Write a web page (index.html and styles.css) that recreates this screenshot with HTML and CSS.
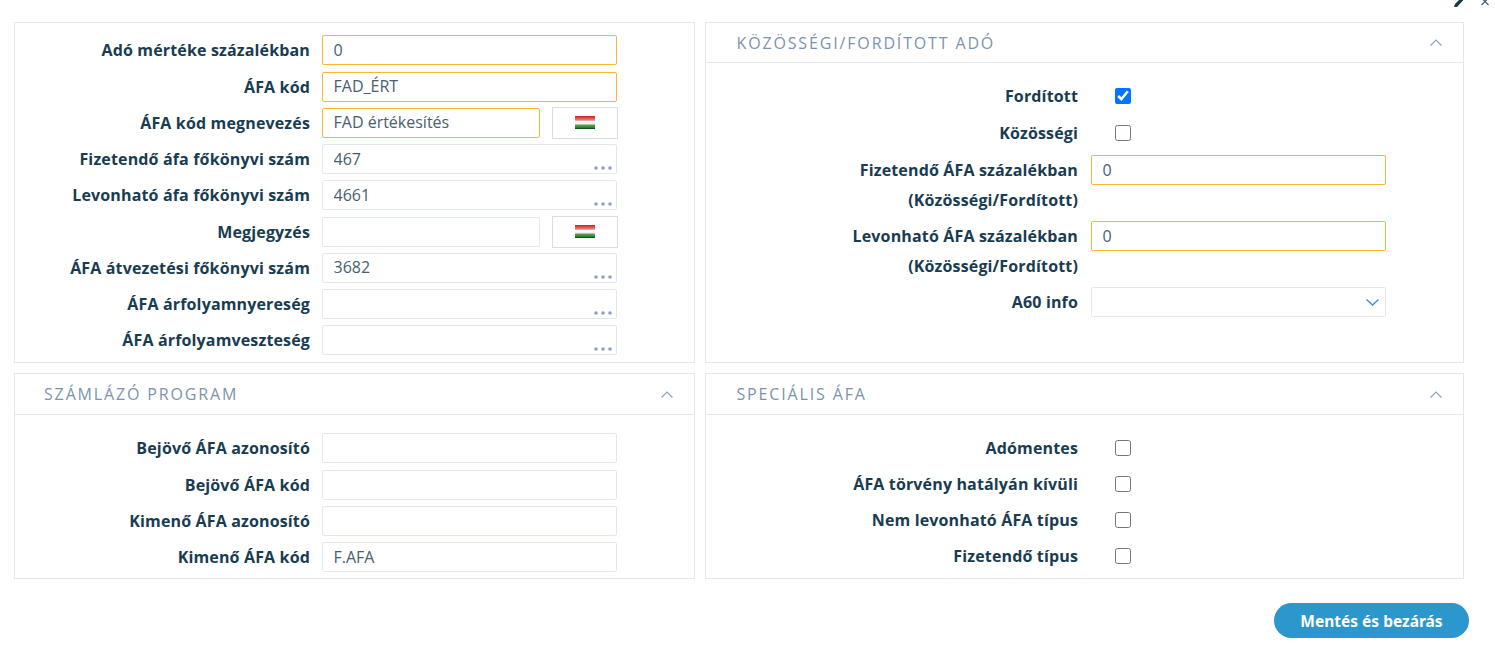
FILE: index.html
```html
<!DOCTYPE html>
<html lang="en">
<head>
    <meta charset="UTF-8">
    <meta name="viewport" content="width=device-width, initial-scale=1.0">
    <title>ÁFA kód</title>
    <link rel="stylesheet" href="styles.css">
</head>
<body>
    <div class="toolbar">
        <svg class="tool-pencil" width="9" height="7" viewBox="0 0 9 7"><path d="M0 7 L1 4 L5 0 L9 0 L9 0.5 L3 7 Z" fill="#173a50"/></svg>
        <svg class="tool-close" width="8" height="6" viewBox="0 0 8 6"><path d="M0.5 -2 L7.5 5 M7.5 -2 L0.5 5" stroke="#3f5f75" stroke-width="1.2" fill="none"/></svg>
    </div>

    <div class="grid">
        <section class="card">
            <div class="card-body first">
                <div class="row"><label>Adó mértéke százalékban</label><input class="field required" type="text" value="0"></div>
                <div class="row"><label>ÁFA kód</label><input class="field required" type="text" value="FAD_ÉRT"></div>
                <div class="row">
                    <label>ÁFA kód megnevezés</label>
                    <input class="field short required" type="text" value="FAD értékesítés">
                    <button class="flag-btn"><span class="flag"></span></button>
                </div>
                <div class="row">
                    <label>Fizetendő áfa főkönyvi szám</label>
                    <div class="lookup"><input class="field" type="text" value="467"><svg class="dots" width="18" height="4" viewBox="0 0 18 4"><circle cx="2" cy="2" r="1.8"/><circle cx="9" cy="2" r="1.8"/><circle cx="16" cy="2" r="1.8"/></svg></div>
                </div>
                <div class="row">
                    <label>Levonható áfa főkönyvi szám</label>
                    <div class="lookup"><input class="field" type="text" value="4661"><svg class="dots" width="18" height="4" viewBox="0 0 18 4"><circle cx="2" cy="2" r="1.8"/><circle cx="9" cy="2" r="1.8"/><circle cx="16" cy="2" r="1.8"/></svg></div>
                </div>
                <div class="row">
                    <label>Megjegyzés</label>
                    <input class="field short" type="text" value="">
                    <button class="flag-btn"><span class="flag"></span></button>
                </div>
                <div class="row">
                    <label>ÁFA átvezetési főkönyvi szám</label>
                    <div class="lookup"><input class="field" type="text" value="3682"><svg class="dots" width="18" height="4" viewBox="0 0 18 4"><circle cx="2" cy="2" r="1.8"/><circle cx="9" cy="2" r="1.8"/><circle cx="16" cy="2" r="1.8"/></svg></div>
                </div>
                <div class="row">
                    <label>ÁFA árfolyamnyereség</label>
                    <div class="lookup"><input class="field" type="text" value=""><svg class="dots" width="18" height="4" viewBox="0 0 18 4"><circle cx="2" cy="2" r="1.8"/><circle cx="9" cy="2" r="1.8"/><circle cx="16" cy="2" r="1.8"/></svg></div>
                </div>
                <div class="row">
                    <label>ÁFA árfolyamveszteség</label>
                    <div class="lookup"><input class="field" type="text" value=""><svg class="dots" width="18" height="4" viewBox="0 0 18 4"><circle cx="2" cy="2" r="1.8"/><circle cx="9" cy="2" r="1.8"/><circle cx="16" cy="2" r="1.8"/></svg></div>
                </div>
            </div>
        </section>

        <section class="card wide">
            <div class="card-header">
                <h2>KÖZÖSSÉGI/FORDÍTOTT ADÓ</h2>
                <svg class="chevron" width="12" height="7" viewBox="0 0 12 7"><path d="M0.5 6.5 L6 1 L11.5 6.5" fill="none" stroke="#8fa3bc" stroke-width="1.2"/></svg>
            </div>
            <div class="card-body">
                <div class="row check-row loose"><label>Fordított</label><input class="check" type="checkbox" checked></div>
                <div class="row check-row loose"><label>Közösségi</label><input class="check" type="checkbox"></div>
                <div class="row tall"><label>Fizetendő ÁFA százalékban<br>(Közösségi/Fordított)</label><input class="field required" type="text" value="0"></div>
                <div class="row tall"><label>Levonható ÁFA százalékban<br>(Közösségi/Fordított)</label><input class="field required" type="text" value="0"></div>
                <div class="row tall">
                    <label>A60 info</label>
                    <div class="lookup">
                        <select class="field select"><option></option></select>
                        <svg class="select-arrow" width="13" height="7" viewBox="0 0 13 7"><path d="M0.5 0.5 L6.5 6 L12.5 0.5" fill="none" stroke="#2c97cc" stroke-width="1.4"/></svg>
                    </div>
                </div>
            </div>
        </section>

        <section class="card lower">
            <div class="card-header">
                <h2>SZÁMLÁZÓ PROGRAM</h2>
                <svg class="chevron" width="12" height="7" viewBox="0 0 12 7"><path d="M0.5 6.5 L6 1 L11.5 6.5" fill="none" stroke="#8fa3bc" stroke-width="1.2"/></svg>
            </div>
            <div class="card-body">
                <div class="row"><label>Bejövő ÁFA azonosító</label><input class="field" type="text" value=""></div>
                <div class="row"><label>Bejövő ÁFA kód</label><input class="field" type="text" value=""></div>
                <div class="row"><label>Kimenő ÁFA azonosító</label><input class="field" type="text" value=""></div>
                <div class="row"><label>Kimenő ÁFA kód</label><input class="field" type="text" value="F.AFA"></div>
            </div>
        </section>

        <section class="card wide lower">
            <div class="card-header">
                <h2>SPECIÁLIS ÁFA</h2>
                <svg class="chevron" width="12" height="7" viewBox="0 0 12 7"><path d="M0.5 6.5 L6 1 L11.5 6.5" fill="none" stroke="#8fa3bc" stroke-width="1.2"/></svg>
            </div>
            <div class="card-body">
                <div class="row check-row"><label>Adómentes</label><input class="check" type="checkbox"></div>
                <div class="row check-row"><label>ÁFA törvény hatályán kívüli</label><input class="check" type="checkbox"></div>
                <div class="row check-row"><label>Nem levonható ÁFA típus</label><input class="check" type="checkbox"></div>
                <div class="row check-row"><label>Fizetendő típus</label><input class="check" type="checkbox"></div>
            </div>
        </section>
    </div>

    <div class="footer">
        <button class="save-btn">Mentés és bezárás</button>
    </div>
</body>
</html>
```

FILE: styles.css
```css
* {
    box-sizing: border-box;
}
body {
    margin: 0;
    background-color: #fff;
    font-family: "Open Sans", Arial, sans-serif;
    font-size: 16px;
    color: #183c52;
}
.toolbar {
    display: flex;
    justify-content: flex-end;
    align-items: flex-start;
    height: 22px;
    padding-right: 6px;
}
.tool-pencil {
    margin-right: 18px;
}
.grid {
    display: grid;
    grid-template-columns: 681px 759px;
    grid-template-rows: 341px 206px;
    gap: 10px;
    padding-left: 14px;
}
.card {
    border: 1px solid #e1e8ee;
}
.card-header {
    display: flex;
    justify-content: space-between;
    align-items: center;
    height: 40px;
    padding: 0 21px 0 29px;
    border-bottom: 1px solid #e1e8ee;
}
.wide .card-header {
    padding-left: 30.5px;
}
.lower .card-header {
    height: 41px;
}
.card-header h2 {
    margin: 0;
    font-size: 16px;
    font-weight: 400;
    letter-spacing: 1.85px;
    color: #7d93ad;
}
.card-body {
    padding: 15.2px 0 0;
}
.card-body.first {
    padding-top: 9.175px;
}
.row {
    display: flex;
    align-items: center;
    height: 36.25px;
}
.row label {
    flex: 0 0 295px;
    margin-right: 12px;
    text-align: right;
    font-weight: 700;
    letter-spacing: 0.15px;
    line-height: 30px;
}
.wide .row label {
    flex-basis: 372px;
    margin-right: 13px;
}
.check-row {
    height: 36px;
}
.check-row.loose {
    height: 36.5px;
}
.row.tall {
    align-items: flex-start;
    height: 66px;
    padding-top: 4px;
}
.field {
    width: 295px;
    height: 30px;
    padding: 0 11px 1px 10.5px;
    border: 1px solid #e1e8ee;
    border-radius: 2px;
    background-color: #fff;
    font-family: inherit;
    font-size: 16px;
    color: #47606f;
    outline: none;
}
.field.short {
    width: 218px;
}
.field.required {
    border-color: #f9b62e;
}
.select {
    display: block;
    appearance: none;
}
.lookup {
    position: relative;
    width: 295px;
    height: 30px;
}
.lookup .field {
    display: block;
}
.dots {
    position: absolute;
    right: 5px;
    bottom: 4px;
    fill: #8da2bf;
}
.select-arrow {
    position: absolute;
    right: 7px;
    top: 12px;
}
.flag-btn {
    display: flex;
    justify-content: center;
    align-items: center;
    width: 66px;
    height: 32px;
    margin-left: 12px;
    padding: 0;
    border: 1px solid #dddddd;
    background-color: #fff;
}
.flag {
    display: block;
    width: 20px;
    height: 13px;
    background: linear-gradient(#c9201f 0, #ee7c78 4px, #e5a5a2 4.5px, #fff 5px, #f3ecec 8px, #5ea55c 9px, #1f7a1f 12px, #0a2a0a 13px);
}
.check {
    width: 16px;
    height: 16px;
    margin: 0 0 0 24px;
}
.footer {
    display: flex;
    justify-content: flex-end;
    padding: 24px 26px 0 0;
}
.save-btn {
    width: 195px;
    height: 35px;
    border: none;
    border-radius: 18px;
    background-color: #2c97cc;
    color: #fff;
    font-family: "Noto Sans", Arial, sans-serif;
    font-size: 15.5px;
    font-weight: 700;
}
```
